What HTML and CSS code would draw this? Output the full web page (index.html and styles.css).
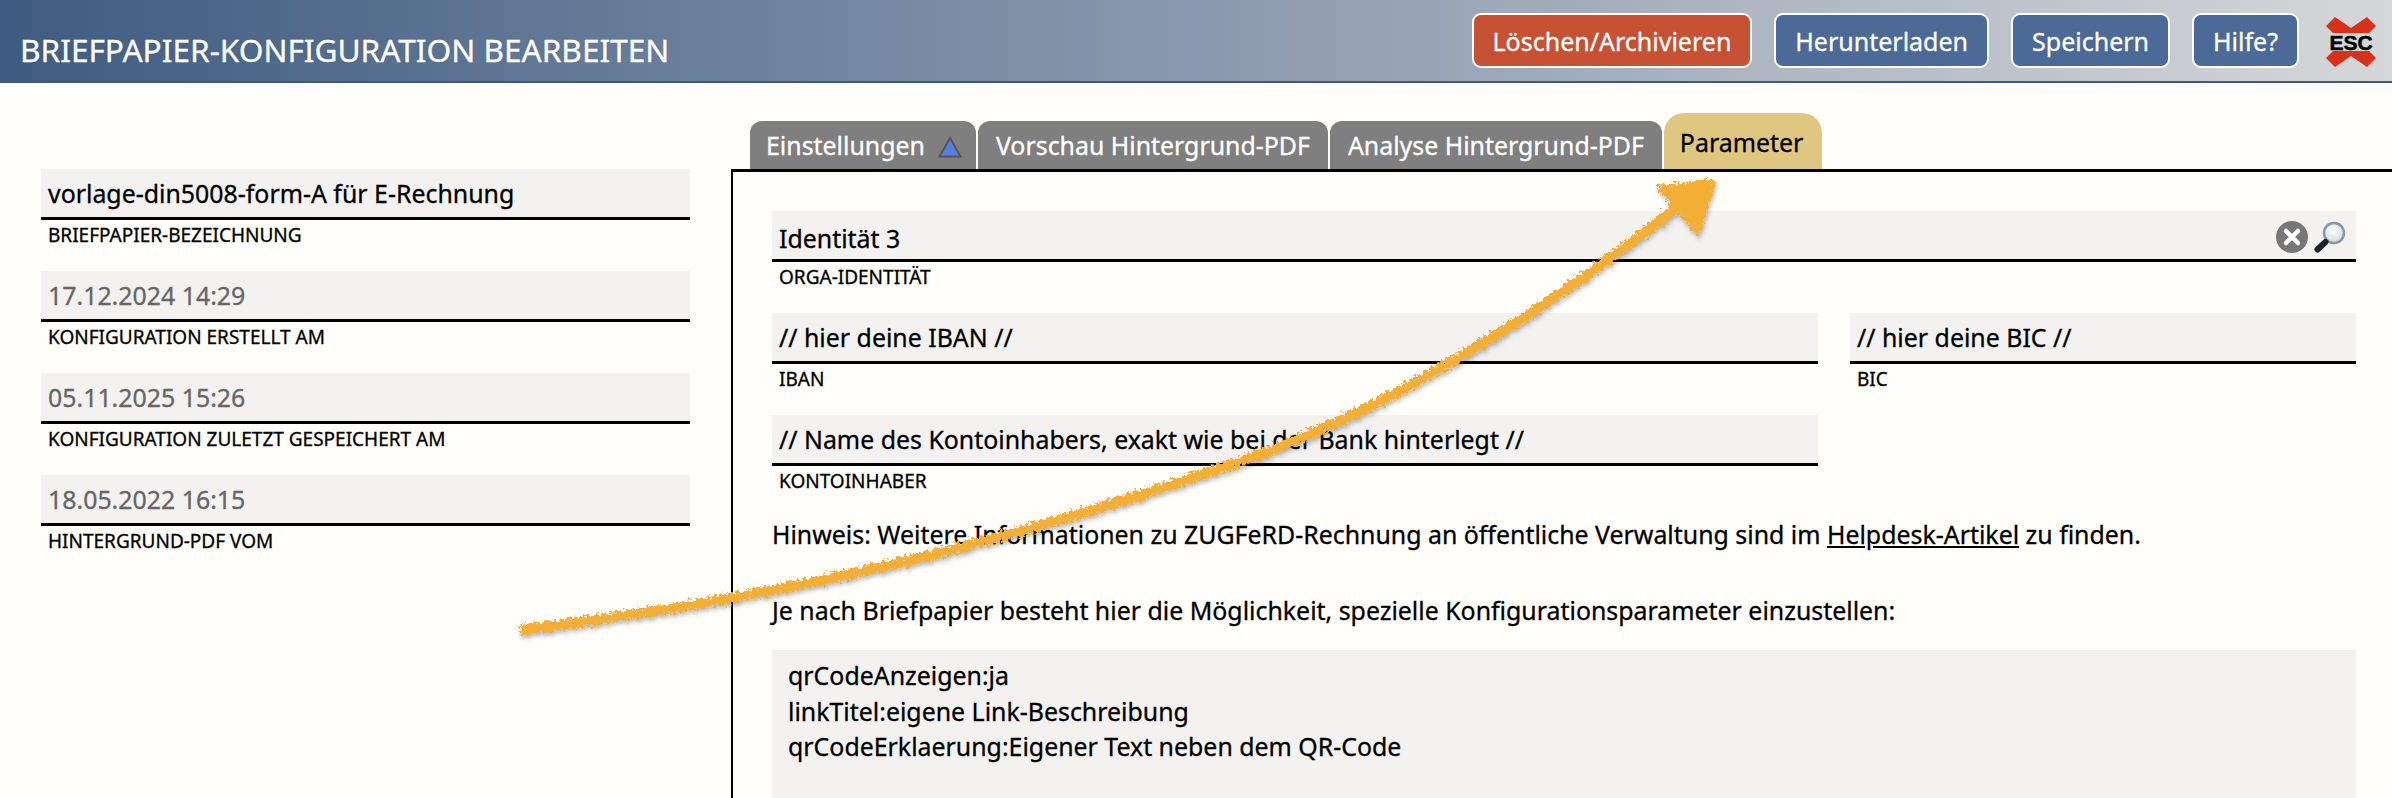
FILE: index.html
```html
<!DOCTYPE html>
<html lang="de">
<head>
    <meta charset="UTF-8">
    <meta name="viewport" content="width=device-width, initial-scale=1.0">
    <title>Briefpapier-Konfiguration bearbeiten</title>
    <link rel="stylesheet" href="styles.css">
</head>
<body>
    <header class="topbar">
        <h1>BRIEFPAPIER-KONFIGURATION BEARBEITEN</h1>
        <nav class="actions">
            <button class="btn btn-danger">Löschen/Archivieren</button>
            <button class="btn">Herunterladen</button>
            <button class="btn">Speichern</button>
            <button class="btn">Hilfe?</button>
            <svg class="esc" width="50" height="50" viewBox="0 0 50 50">
                <path d="M0 9 9 0 25 11 41 0 50 9 43 16H7ZM0 41 9 50 25 39 41 50 50 41 43 34H7Z" fill="#d9301c"/>
                <text x="25" y="32.5" text-anchor="middle" class="esc-text">ESC</text>
            </svg>
        </nav>
    </header>

    <main class="page">
        <aside class="meta">
            <div class="field">
                <div class="value">vorlage-din5008-form-A für E-Rechnung</div>
                <div class="label">BRIEFPAPIER-BEZEICHNUNG</div>
            </div>
            <div class="field">
                <div class="value muted">17.12.2024 14:29</div>
                <div class="label">KONFIGURATION ERSTELLT AM</div>
            </div>
            <div class="field">
                <div class="value muted">05.11.2025 15:26</div>
                <div class="label">KONFIGURATION ZULETZT GESPEICHERT AM</div>
            </div>
            <div class="field">
                <div class="value muted">18.05.2022 16:15</div>
                <div class="label">HINTERGRUND-PDF VOM</div>
            </div>
        </aside>

        <section class="editor">
            <div class="tabs">
                <div class="tab tab-first">Einstellungen
                    <svg class="tab-arrow" width="24" height="22" viewBox="0 0 24 22"><path d="M12 2 22.5 20.5H1.5Z" fill="#5580e2" stroke="#555" stroke-width="2"/></svg>
                </div>
                <div class="tab">Vorschau Hintergrund-PDF</div>
                <div class="tab">Analyse Hintergrund-PDF</div>
                <div class="tab tab-active">Parameter</div>
            </div>
            <div class="panel">
                <div class="field">
                    <div class="value value-icons">
                        <span class="value-low">Identität 3</span>
                        <span class="icons">
                            <svg width="32" height="32" viewBox="0 0 32 32"><circle cx="16" cy="16" r="16" fill="#777"/><path d="M10 10 22 22M22 10 10 22" stroke="#fff" stroke-width="4.5" stroke-linecap="round"/></svg>
                            <svg width="32" height="32" viewBox="0 0 32 32">
                                <defs><radialGradient id="lens" cx=".45" cy=".4" r=".6"><stop offset="0" stop-color="#fff"/><stop offset="1" stop-color="#d5d8dc"/></radialGradient></defs>
                                <circle cx="20" cy="12" r="10" fill="url(#lens)" stroke="#8c95a0" stroke-width="2.5"/>
                                <path d="M13 19 11 21" stroke="#777" stroke-width="3"/>
                                <path d="M11.5 21 3.5 28.5" stroke="#1d2328" stroke-width="6" stroke-linecap="round"/>
                            </svg>
                        </span>
                    </div>
                    <div class="label">ORGA-IDENTITÄT</div>
                </div>
                <div class="bank-row">
                    <div class="field">
                        <div class="value">// hier deine IBAN //</div>
                        <div class="label">IBAN</div>
                    </div>
                    <div class="field">
                        <div class="value">// hier deine BIC //</div>
                        <div class="label">BIC</div>
                    </div>
                </div>
                <div class="bank-row">
                    <div class="field">
                        <div class="value">// Name des Kontoinhabers, exakt wie bei der Bank hinterlegt //</div>
                        <div class="label">KONTOINHABER</div>
                    </div>
                </div>
                <p class="note">Hinweis: Weitere Informationen zu ZUGFeRD-Rechnung an öffentliche Verwaltung sind im <a href="#">Helpdesk-Artikel</a> zu finden.</p>
                <p class="note note-second">Je nach Briefpapier besteht hier die Möglichkeit, spezielle Konfigurationsparameter einzustellen:</p>
                <div class="params">qrCodeAnzeigen:ja<br>linkTitel:eigene Link-Beschreibung<br>qrCodeErklaerung:Eigener Text neben dem QR-Code</div>
            </div>
        </section>
    </main>

    <!-- Pfeil liegt frei ueber der Seite -->
    <svg class="pointer" width="2392" height="798" viewBox="0 0 2392 798">
        <defs>
            <filter id="chalk" x="-5%" y="-5%" width="110%" height="110%">
                <feTurbulence type="fractalNoise" baseFrequency=".3" numOctaves="4" seed="4"/>
                <feDisplacementMap in="SourceGraphic" scale="11" xChannelSelector="R" yChannelSelector="G"/>
                <feDropShadow dx="1" dy="3" stdDeviation="2" flood-color="#000" flood-opacity=".28"/>
            </filter>
        </defs>
        <g filter="url(#chalk)" fill="#f2ae36" stroke="#f2ae36">
            <path d="M520 630C800 595 1000 545 1245 460C1400 405 1560 300 1680 205" fill="none" stroke-width="10"/>
            <path d="M1660 188 1713 182 1698 233Z" stroke-width="5" stroke-linejoin="round"/>
        </g>
    </svg>
</body>
</html>
```

FILE: styles.css
```css
html {
    overflow: hidden;
}
body {
    margin: 0;
    height: 798px;
    overflow: hidden;
    background: #fffefa;
    color: #000;
    font-family: "Noto Sans", "Open Sans", sans-serif;
    font-size: 24.9px;
    -webkit-text-stroke: .3px;
    position: relative;
}
.topbar {
    height: 81px;
    display: flex;
    justify-content: space-between;
    background: linear-gradient(to right, #3e5b81, #d6d7d9);
    border-bottom: 2px solid #3c5a80;
}
.topbar h1 {
    margin: 30px 0 0 20px;
    color: #fff;
    font-size: 31.6px;
    font-weight: 400;
    line-height: 40px;
    white-space: nowrap;
}
.actions {
    display: flex;
    align-items: flex-start;
    gap: 22px;
    padding: 13px 16px 0 0;
}
.btn {
    height: 55px;
    padding: 0 19px;
    background: #4b6a97;
    color: #fff;
    border: 2px solid #fff;
    border-radius: 9px;
    font-family: inherit;
    font-size: 25px;
    -webkit-text-stroke: .3px;
}
.btn-danger {
    background: #c75133;
}
.esc {
    margin: 4px 0 0 5px;
}
.esc-text {
    font-family: "Liberation Sans", sans-serif;
    font-size: 21px;
    font-weight: 700;
    fill: #000;
    stroke: #000;
    stroke-width: .5px;
}
.page {
    display: flex;
    padding-top: 30px;
}
.meta {
    width: 649px;
    margin: 56px 41px 0;
    flex-shrink: 0;
}
.field {
    height: 102px;
}
.value {
    height: 48px;
    padding-left: 7px;
    background: #f3f2f0;
    border-bottom: 3px solid #000;
    line-height: 49px;
    white-space: nowrap;
}
.muted {
    color: #666;
}
.label {
    padding-left: 7px;
    font-size: 19px;
    line-height: 30px;
}
.value-icons {
    display: flex;
    justify-content: space-between;
}
.value-low {
    padding-top: 3px;
}
.icons {
    display: flex;
    gap: 6px;
    padding: 10px 10px 0 0;
}
.editor {
    flex: 1;
    min-width: 0;
}
.tabs {
    display: flex;
    align-items: flex-end;
    gap: 2px;
    height: 56px;
    margin-left: 19px;
}
.tab {
    height: 48px;
    padding: 0 18px;
    background: #7f7f7f;
    color: #fff;
    border-radius: 12px 12px 0 0;
    line-height: 50px;
    white-space: nowrap;
    display: flex;
    gap: 13px;
    align-items: center;
}
.tab-first {
    padding: 0 14px 0 16px;
}
.tab-arrow {
    margin-top: 3px;
}
.tab-active {
    height: 56px;
    padding: 0 19px 0 16px;
    line-height: 58px;
    align-items: flex-start;
    background: #e0c781;
    color: #000;
    border-radius: 20px 20px 0 0;
}
.panel {
    border-top: 3px solid #000;
    border-left: 2px solid #000;
    padding: 39px 36px 0 39px;
}
.bank-row {
    display: grid;
    grid-template-columns: 1046px 506px;
    justify-content: space-between;
}
.note {
    margin: 0;
    line-height: 34px;
}
.note-second {
    padding-top: 42px;
}
.params {
    margin-top: 23px;
    height: 160px;
    padding: 8px 16px;
    background: #f3f2f0;
    line-height: 35.5px;
}
a {
    color: inherit;
}
.pointer {
    position: absolute;
    top: 0;
    left: 0;
    pointer-events: none;
}
```
